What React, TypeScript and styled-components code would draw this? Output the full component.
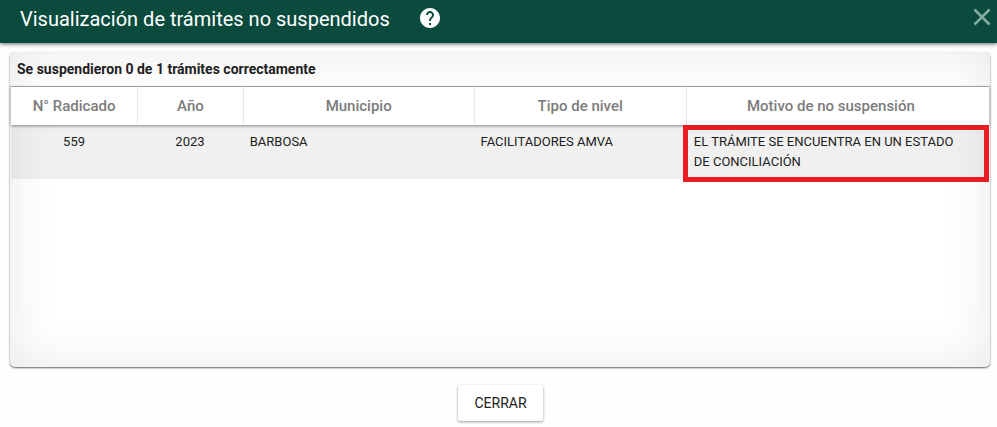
import React from "react";
import styled, { createGlobalStyle } from "styled-components";

const GlobalStyle = createGlobalStyle`
  *, *::before, *::after { box-sizing: border-box; }
  body {
    margin: 0;
    background: #fefefe;
    color: #212121;
    font-family: Roboto, "Liberation Sans", sans-serif;
  }
`;

const Dialog = styled.main`
  display: flex;
  flex-direction: column;
  min-height: 100vh;
`;

const Toolbar = styled.header`
  display: flex;
  align-items: center;
  height: 43px;
  padding: 0 6px 5px 20px;
  gap: 28px;
  background: #0b4b3e;
  color: #fff;
  box-shadow: 0 1px 4px rgba(0, 0, 0, 0.6);
`;

const Title = styled.h1`
  margin: 0;
  font-size: 20px;
  line-height: 24px;
  font-weight: 400;
`;

const IconButton = styled.button<{ $end?: boolean }>`
  display: flex;
  margin: 0 0 0 ${(p) => (p.$end ? "auto" : "0")};
  padding: 0 0 ${(p) => (p.$end ? "4px" : "2px")};
  border: 0;
  background: none;
  color: ${(p) => (p.$end ? "#86aaa0" : "#fff")};
  cursor: pointer;
`;

const Card = styled.section`
  flex: 1;
  margin: 9px 7px 0 10px;
  padding: 0 1px;
  border-radius: 5px;
  background: #fff;
  box-shadow:
    inset 0 0 50px rgba(0, 0, 0, 0.09),
    0 1px 2px rgba(0, 0, 0, 0.6);
`;

const Summary = styled.h2`
  margin: 0 -1px;
  padding: 7px 7px 7px;
  border-bottom: 1px solid #aaa;
  font-size: 14px;
  line-height: 20px;
  font-weight: 700;
`;

const Table = styled.table`
  width: 100%;
  table-layout: fixed;
  border-collapse: separate;
  border-spacing: 0;
`;

const Column = styled.col<{ $share: number }>`
  width: ${(p) => p.$share}%;
`;

const HeadRow = styled.tr`
  position: relative;
  background: #fff;
  box-shadow: 0 1px 3px rgba(0, 0, 0, 0.45);
`;

const HeadCell = styled.th`
  height: 38px;
  padding: 0 8px;
  color: #7c7c7c;
  font-size: 15px;
  line-height: 20px;
  font-weight: 500;
  & + & { border-left: 1px solid #e8e8e8; }
  &:last-child { padding-right: 22px; }
`;

const Row = styled.tr`
  background: rgba(0, 0, 0, 0.06);
`;

const Cell = styled.td<{ $center?: boolean; $marked?: boolean }>`
  position: relative;
  padding: 7px;
  padding-left: ${(p) => (p.$marked ? "8px" : "7px")};
  padding-right: ${(p) => (p.$marked ? "24px" : "7px")};
  font-size: 13px;
  line-height: 20px;
  text-align: ${(p) => (p.$center ? "center" : "left")};
  vertical-align: top;
  &::after {
    content: ${(p) => (p.$marked ? '""' : "none")};
    position: absolute;
    inset: 0 0 -3px -3px;
    border: 5px solid #e91c24;
  }
`;

const Actions = styled.footer`
  display: flex;
  justify-content: center;
  padding: 18px 0 6px 4px;
`;

const CloseButton = styled.button`
  height: 36px;
  padding: 0 16px;
  border: 0;
  border-radius: 2px;
  background: #fff;
  color: #212121;
  font: 400 14px/36px Roboto, "Liberation Sans", sans-serif;
  box-shadow: 0 1px 3px rgba(0, 0, 0, 0.4);
  cursor: pointer;
`;

const columns = [
  { label: "N° Radicado", share: 12.9 },
  { label: "Año", share: 10.8 },
  { label: "Municipio", share: 23.6 },
  { label: "Tipo de nivel", share: 21.7 },
  { label: "Motivo de no suspensión", share: 31 },
];

const records = [
  {
    id: "559",
    year: "2023",
    town: "BARBOSA",
    level: "FACILITADORES AMVA",
    reason: "EL TRÁMITE SE ENCUENTRA EN UN ESTADO DE CONCILIACIÓN",
  },
];

export default function App() {
  return (
    <>
      <GlobalStyle />
      <Dialog>
        <Toolbar>
          <Title>Visualización de trámites no suspendidos</Title>
          <IconButton type="button" aria-label="Ayuda">
            <svg width="24" height="24" viewBox="0 0 24 24" fill="currentColor" aria-hidden="true">
              <path d="M12 2C6.48 2 2 6.48 2 12s4.48 10 10 10 10-4.48 10-10S17.52 2 12 2zm1 17h-2v-2h2v2zm2.07-7.75l-.9.92C13.45 12.9 13 13.5 13 15h-2v-.5c0-1.1.45-2.1 1.17-2.83l1.24-1.26c.37-.36.59-.86.59-1.41 0-1.1-.9-2-2-2s-2 .9-2 2H8c0-2.21 1.79-4 4-4s4 1.79 4 4c0 .88-.36 1.68-.93 2.25z" />
            </svg>
          </IconButton>
          <IconButton type="button" aria-label="Cerrar ventana" $end>
            <svg width="18" height="18" viewBox="0 0 18 18" fill="none" stroke="currentColor" strokeWidth="2.5" aria-hidden="true">
              <path d="M1.5 1.5l15 15M16.5 1.5l-15 15" />
            </svg>
          </IconButton>
        </Toolbar>
        <Card>
          <Summary>Se suspendieron 0 de 1 trámites correctamente</Summary>
          <Table>
            <colgroup>
              {columns.map((c) => (
                <Column key={c.label} $share={c.share} />
              ))}
            </colgroup>
            <thead>
              <HeadRow>
                {columns.map((c) => (
                  <HeadCell key={c.label} scope="col">{c.label}</HeadCell>
                ))}
              </HeadRow>
            </thead>
            <tbody>
              {records.map((r) => (
                <Row key={r.id}>
                  <Cell $center>{r.id}</Cell>
                  <Cell $center>{r.year}</Cell>
                  <Cell>{r.town}</Cell>
                  <Cell>{r.level}</Cell>
                  <Cell $marked>{r.reason}</Cell>
                </Row>
              ))}
            </tbody>
          </Table>
        </Card>
        <Actions>
          <CloseButton type="button">CERRAR</CloseButton>
        </Actions>
      </Dialog>
    </>
  );
}
